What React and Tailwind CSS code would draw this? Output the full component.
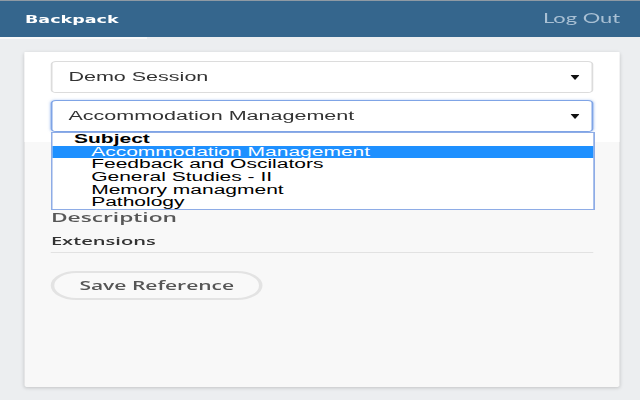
import React from "react";

// The reference is drawn wide: the page is laid out at 366px and stretched 1.75x horizontally.
const subjects = [
  "Accommodation Management",
  "Feedback and Oscilators",
  "General Studies - II",
  "Memory managment",
  "Pathology",
];

const Caret = () => (
  <svg width="5.2" height="5" viewBox="0 0 10 5" preserveAspectRatio="none">
    <path d="M0 0 L10 0 L5 5 Z" fill="#111" />
  </svg>
);

const SelectBox = ({ value, focused, children }) => (
  <div className="relative">
    <div
      className={`flex h-[32px] items-center justify-between rounded-[3px] border bg-white pl-[9px] pr-[7px] text-[12.3px] text-[#333] ${
        focused
          ? "border-[#7fa4e6] shadow-[0_0_2px_rgba(100,150,230,0.5)]"
          : "border-[#dcdcdc]"
      }`}
      style={{ fontFamily: '"Liberation Sans", Arial, sans-serif' }}
    >
      <span>{value}</span>
      <Caret />
    </div>
    {children}
  </div>
);

const App = () => {
  return (
    <div className="h-[400px] w-[640px] overflow-hidden bg-[#eceef0]">
      <div className="h-[400px] w-[365.72px] origin-top-left scale-x-[1.75]">
        {/* Header */}
        <div className="flex h-[37px] items-center justify-between border-t border-[#8f9aa4] bg-[#35668d] pl-[14.3px] pr-[11.4px]">
          <span
            className="text-[10px] font-bold text-white"
            style={{ fontFamily: '"DejaVu Sans", sans-serif' }}
          >
            Backpack
          </span>
          <span
            className="text-[12.5px] text-[#a9c0d4]"
            style={{ fontFamily: "Lato, sans-serif" }}
          >
            Log Out
          </span>
        </div>
        <div className="h-[2px] w-[84px] bg-[#f9f9f9]" />

        {/* Card */}
        <div className="ml-[13.7px] mt-[13px] h-[335px] w-[340.6px] rounded-[2px] bg-[#f8f8f8] shadow-[0_1px_3px_rgba(0,0,0,0.18)]">
          <div className="flex flex-col gap-[7px] bg-white px-[15.4px] pb-[10px] pt-[9px]">
            <SelectBox value="Demo Session" />
            <SelectBox value="Accommodation Management" focused>
              {/* Open dropdown list */}
              <div
                className="absolute left-0 top-full z-10 w-[310.9px] border border-[#8eace6] bg-white text-[12px] leading-[12.7px] text-black"
                style={{ fontFamily: '"Liberation Sans", Arial, sans-serif' }}
              >
                <div className="h-[12.7px] pl-[12.2px] font-bold">Subject</div>
                {subjects.map((s, i) => (
                  <div
                    key={s}
                    className={`h-[12.7px] pl-[22px] ${
                      i === 0 ? "bg-[#1e90ff] text-white" : ""
                    }`}
                  >
                    {s}
                  </div>
                ))}
              </div>
            </SelectBox>
          </div>

          <div
            className="px-[15.4px] pt-[67px]"
            style={{ fontFamily: '"Open Sans", sans-serif' }}
          >
            <div className="text-[13px] font-semibold leading-[16px] text-[#575757]">
              Description
            </div>
            <div className="border-b border-[#e2e2e2] pb-[3px]">
              <div className="mt-[8px] text-[11.5px] font-semibold leading-[16px] text-[#333]">
                Extensions
              </div>
            </div>
            <button className="mt-[18px] flex h-[29px] w-[121px] items-center justify-center rounded-full border-2 border-[#e3e3e3] bg-[#f9f9f9] text-[12px] font-semibold text-[#555]">
              Save Reference
            </button>
          </div>
        </div>
      </div>
    </div>
  );
};

export default App;
